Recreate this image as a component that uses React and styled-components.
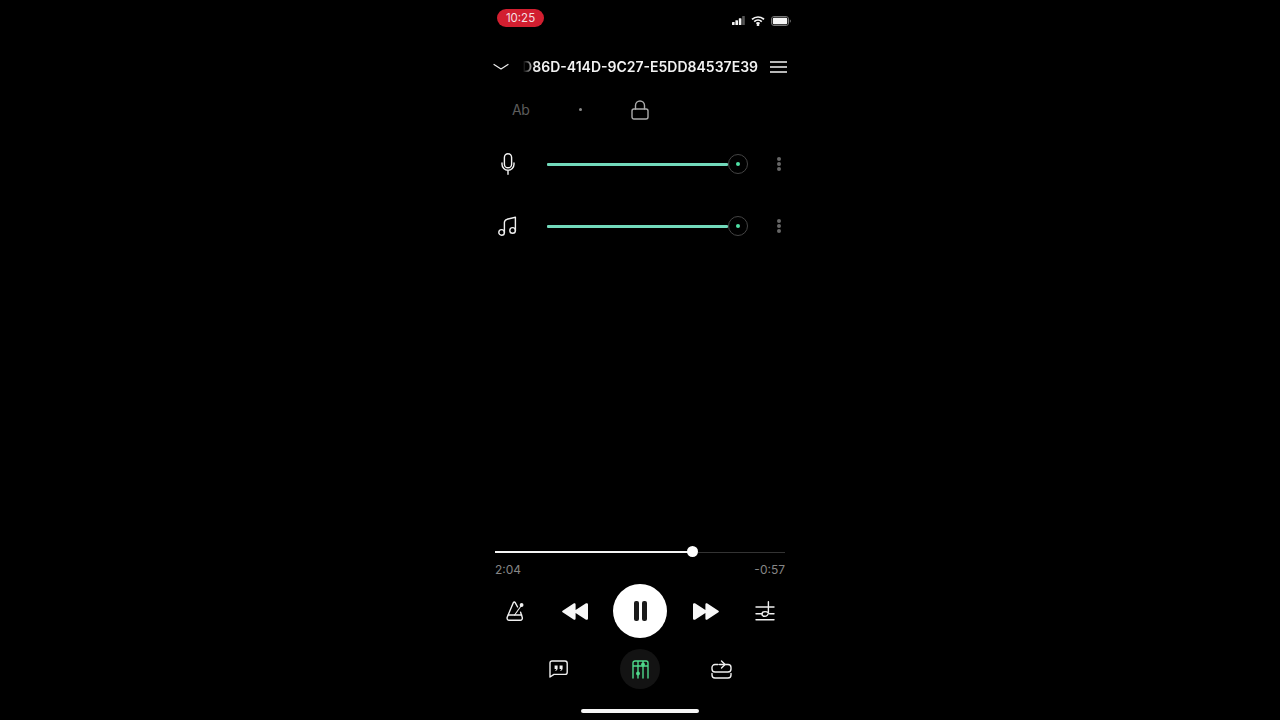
import React from 'react';
import styled, { createGlobalStyle } from 'styled-components';

const Global = createGlobalStyle`
  html, body {
    margin: 0;
    padding: 0;
    background: #000;
  }
`;

const Screen = styled.div`
  width: 320px;
  height: 720px;
  margin: 0 auto;
  display: flex;
  flex-direction: column;
  background: #000;
  color: #fff;
  font-family: Inter, "Liberation Sans", sans-serif;
  overflow: hidden;
`;

const StatusBar = styled.div`
  height: 18px;
  margin-top: 9px;
  padding: 0 9px 0 17px;
  display: flex;
  align-items: center;
  justify-content: space-between;
`;

const TimePill = styled.div`
  width: 47px;
  height: 18px;
  border-radius: 9px;
  background: #d21f30;
  font-size: 11.5px;
  line-height: 18px;
  text-align: center;
  color: #f4dfe1;
`;

const StatusIcons = styled.div`
  display: flex;
  align-items: center;
  gap: 6px;
  margin-top: 5px;
`;

const Header = styled.div`
  margin-top: 28px;
  height: 24px;
  padding: 0 13px;
  display: flex;
  align-items: center;
`;

const Title = styled.div`
  width: 235px;
  margin-left: 14px;
  margin-bottom: 2px;
  overflow: hidden;
  display: flex;
  justify-content: flex-end;
  white-space: nowrap;
  font-size: 14px;
  font-weight: 600;
  color: #f2f2f2;
  mask-image: linear-gradient(to right, transparent 0, #000 12px);
`;

const MenuSpot = styled.div`
  margin-left: 12px;
  display: flex;
`;

const ToolRow = styled.div`
  margin-top: 19px;
  height: 24px;
  padding-left: 32px;
  display: flex;
  align-items: center;
`;

const AbLabel = styled.span`
  width: 18px;
  margin-bottom: 2px;
  font-size: 14px;
  letter-spacing: -0.5px;
  color: #5c5c5c;
`;

const ToolDot = styled.span`
  width: 3px;
  height: 3px;
  margin-left: 49px;
  margin-bottom: 2px;
  border-radius: 50%;
  background: #8a8a8a;
`;

const LockSpot = styled.div`
  margin-left: 49px;
  display: flex;
`;

const Mixer = styled.div`
  margin-top: 29px;
  padding: 0 15px;
  display: flex;
  flex-direction: column;
  gap: 37px;
`;

const MixerRow = styled.div`
  height: 25px;
  display: flex;
  align-items: center;
`;

const MixerIcon = styled.div`
  width: 26px;
  margin-right: 26px;
  display: flex;
  justify-content: center;
`;

const Track = styled.div`
  flex: 1;
  height: 3px;
  margin-top: 1px;
  border-radius: 1px;
  background: #72d9bb;
`;

const Knob = styled.div`
  width: 20px;
  height: 20px;
  box-sizing: border-box;
  border: 1.5px solid #444;
  border-radius: 50%;
  display: flex;
  align-items: center;
  justify-content: center;
  &::after {
    content: '';
    width: 4px;
    height: 4px;
    border-radius: 50%;
    background: #4fe0a5;
  }
`;

const MoreDots = styled.div`
  width: 12px;
  margin-left: 25px;
  display: flex;
  flex-direction: column;
  align-items: center;
  gap: 1px;
  span {
    width: 4px;
    height: 4px;
    border-radius: 50%;
    background: #666;
  }
`;

const Spacer = styled.div`
  flex: 1;
`;

const Progress = styled.div`
  margin: 0 15px;
  height: 12px;
  display: flex;
  align-items: center;
  position: relative;
  background: linear-gradient(#333, #333) no-repeat center / 100% 1px;
`;

const ProgressFill = styled.div`
  height: 2px;
  background: #f4f4f4;
`;

const ProgressThumb = styled.div`
  position: absolute;
  top: 0;
  width: 11px;
  height: 11px;
  margin-left: -5.5px;
  border-radius: 50%;
  background: #fff;
`;

const Times = styled.div`
  margin-top: 5px;
  padding: 0 15px;
  display: flex;
  justify-content: space-between;
  font-size: 12px;
  line-height: 14px;
  color: #868686;
`;

const Controls = styled.div`
  margin-top: 7px;
  height: 54px;
  padding-left: 15px;
  display: flex;
  align-items: center;
`;

const Spot = styled.div`
  margin-left: ${(p) => p.$left}px;
  display: flex;
  align-items: center;
  justify-content: center;
`;

const PauseButton = styled.div`
  width: 54px;
  height: 54px;
  border-radius: 50%;
  background: #fff;
  display: flex;
  align-items: center;
  justify-content: center;
  gap: 3px;
  margin-left: ${(p) => p.$left}px;
  span {
    width: 5px;
    height: 20px;
    border-radius: 2px;
    background: #1a1a1a;
  }
`;

const Secondary = styled.div`
  margin-top: 11px;
  height: 40px;
  padding-left: 15px;
  display: flex;
  align-items: center;
`;

const ActiveDisc = styled.div`
  width: 40px;
  height: 40px;
  border-radius: 50%;
  background: #131313;
  display: flex;
  align-items: center;
  justify-content: center;
  margin-left: ${(p) => p.$left}px;
`;

const HomeBar = styled.div`
  width: 118px;
  height: 4px;
  margin: 20px auto 7px;
  border-radius: 2px;
  background: #f5f5f5;
`;

const line = { fill: 'none', stroke: 'currentColor', strokeWidth: 1.4, strokeLinecap: 'round', strokeLinejoin: 'round' };

function Signal() {
  return (
    <svg width="13" height="9" viewBox="0 0 13 9">
      <rect x="0" y="6" width="2.6" height="3" rx="0.5" fill="#f4f4f4" />
      <rect x="3.4" y="4.2" width="2.6" height="4.8" rx="0.5" fill="#f4f4f4" />
      <rect x="6.8" y="2.2" width="2.6" height="6.8" rx="0.5" fill="#f4f4f4" />
      <rect x="10.2" y="0" width="2.6" height="9" rx="0.5" fill="#555" />
    </svg>
  );
}

function Wifi() {
  return (
    <svg width="14" height="10" viewBox="0 0 14 10" fill="none" stroke="#f6f6f6" strokeWidth="1.7">
      <path d="M1 3.4C4.4 .2 9.6 .2 13 3.4" />
      <path d="M3.2 5.6C5.4 3.6 8.6 3.6 10.8 5.6" />
      <path d="M5.4 7.7C6.3 6.9 7.7 6.9 8.6 7.7" />
      <circle cx="7" cy="9" r="0.5" fill="#f6f6f6" />
    </svg>
  );
}

function Battery() {
  return (
    <svg width="20" height="10" viewBox="0 0 20 10">
      <rect x="0.5" y="0.5" width="17" height="9" rx="2.5" fill="none" stroke="#777" />
      <rect x="1.8" y="1.8" width="14.4" height="6.4" rx="1.2" fill="#f5f5f5" />
      <path d="M18.8 3.4c.7.2 1 .8 1 1.6s-.3 1.4-1 1.6z" fill="#777" />
    </svg>
  );
}

function Chevron() {
  return (
    <svg width="16" height="8" viewBox="0 0 16 8" style={{ color: '#eee' }}>
      <path d="M1 1.5 8 6 15 1.5" {...line} strokeWidth="1.2" />
    </svg>
  );
}

function Menu() {
  return (
    <svg width="17" height="12" viewBox="0 0 17 12" stroke="#f4f4f4" strokeWidth="1.5">
      <path d="M0 1h17M0 6h17M0 11h17" />
    </svg>
  );
}

function Lock() {
  return (
    <svg width="18" height="20" viewBox="0 0 18 20" style={{ color: '#ababab' }}>
      <rect x="1" y="9" width="16" height="10" rx="2" {...line} />
      <path d="M4.5 9V5.5a4.5 4.5 0 0 1 9 0V9" {...line} />
    </svg>
  );
}

function Mic() {
  return (
    <svg width="14" height="22" viewBox="0 0 14 22" style={{ color: '#f4f4f4' }}>
      <rect x="3.4" y="0.8" width="7.2" height="14" rx="3.6" {...line} />
      <path d="M1 10v1.2a6 6 0 0 0 12 0V10M7 17.4V21.2" {...line} />
    </svg>
  );
}

function Notes() {
  return (
    <svg width="20" height="20" viewBox="0 0 20 20" style={{ color: '#f0f0f0' }}>
      <circle cx="3.6" cy="16.4" r="2.8" {...line} />
      <circle cx="14.6" cy="14.4" r="2.8" {...line} />
      <path d="M6.4 16.4V6.4C6.4 4.6 7.2 3.8 9 3.3L17.4 1.2v13.2" {...line} />
    </svg>
  );
}

function Metronome() {
  return (
    <svg width="18" height="20" viewBox="0 0 18 20" style={{ color: '#f0f0f0' }}>
      <path d="M7.4 1.6c.5-.9 1.3-.9 1.8 0l2.4 4.4M7.4 1.6 1.2 16.2c-.5 1.6.4 3 2 3h11c1.6 0 2.5-1.3 2-3l-1.6-5" {...line} />
      <path d="M2.4 14h13.2" {...line} />
      <path d="M8.6 14 15 5" {...line} strokeWidth="1.1" />
      <circle cx="15.6" cy="4" r="1.9" fill="currentColor" />
    </svg>
  );
}

function Rewind({ flip }) {
  return (
    <svg width="26" height="17" viewBox="0 0 26 17" style={{ transform: flip ? 'scaleX(-1)' : undefined }}>
      <path
        d="M0.6 7.7 11.6 0.4C12.6-.2 13.6 .3 13.6 1.5V7L23.6.4C24.8-.2 26 .3 26 1.5V15.5C26 16.7 24.8 17.2 23.6 16.6L13.6 10V15.5C13.6 16.7 12.6 17.2 11.6 16.6L0.6 9.3C0 8.9 0 8.1.6 7.7Z"
        fill="#f7f7f7"
      />
    </svg>
  );
}

function NoteLines() {
  return (
    <svg width="20" height="20" viewBox="0 0 20 20" style={{ color: '#f0f0f0' }}>
      <path d="M1 6h18M1 12.8h6M14.5 12.8h4.5M1 18.8h18" {...line} />
      <path d="M13.4 0.8V11.5c0 2.2-1.8 3.8-3.8 3.8-1.6 0-2.6-.9-2.6-2.2 0-1.5 1.4-2.5 3-2.5 1.2 0 2.5.5 3.4 1.2" {...line} />
    </svg>
  );
}

function Quote() {
  return (
    <svg width="19" height="18" viewBox="0 0 19 18" style={{ color: '#f0f0f0' }}>
      <path d="M3 1h13a2.2 2.2 0 0 1 2.2 2.2v9a2.2 2.2 0 0 1-2.2 2.2H5L1 17V3A2 2 0 0 1 3 1Z" {...line} />
      <path d="M5.6 5.6h3v3c0 1.2-.8 2-2 2.4l-.3-1c.6-.2 1-.6 1-1.1H5.6ZM10.6 5.6h3v3c0 1.2-.8 2-2 2.4l-.3-1c.6-.2 1-.6 1-1.1h-1.7Z" fill="currentColor" />
    </svg>
  );
}

function Fretboard() {
  return (
    <svg width="17" height="19" viewBox="0 0 17 19" style={{ color: '#4fd98c' }}>
      <path d="M1 18V3a2 2 0 0 1 2-2h11a2 2 0 0 1 2 2v15M6 1v17M11 1v17M1 6h15" {...line} />
      <circle cx="11" cy="4.5" r="1.9" fill="currentColor" />
      <circle cx="6" cy="13.5" r="1.9" fill="currentColor" />
    </svg>
  );
}

function Loop() {
  return (
    <svg width="21" height="19" viewBox="0 0 21 19" style={{ color: '#f0f0f0' }}>
      <path d="M7 4.5H4a3 3 0 0 0-3 3V9a3 3 0 0 0 3 3h13a3 3 0 0 0 3-3V7.5a3 3 0 0 0-3-3H8.5" {...line} />
      <path d="M10.5 1 14 4.5 10.5 8" {...line} />
      <path d="M1 13.5v1.5a3 3 0 0 0 3 3h13a3 3 0 0 0 3-3v-1.5" {...line} />
    </svg>
  );
}

function MixerLine({ icon }) {
  return (
    <MixerRow>
      <MixerIcon>{icon}</MixerIcon>
      <Track />
      <Knob />
      <MoreDots><span /><span /><span /></MoreDots>
    </MixerRow>
  );
}

export default function App() {
  const played = 197.5 / 290;
  return (
    <Screen>
      <Global />
      <StatusBar>
        <TimePill>10:25</TimePill>
        <StatusIcons>
          <Signal />
          <Wifi />
          <Battery />
        </StatusIcons>
      </StatusBar>

      <Header>
        <Chevron />
        <Title>D86D-414D-9C27-E5DD84537E39</Title>
        <MenuSpot><Menu /></MenuSpot>
      </Header>

      <ToolRow>
        <AbLabel>Ab</AbLabel>
        <ToolDot />
        <LockSpot><Lock /></LockSpot>
      </ToolRow>

      <Mixer>
        <MixerLine icon={<Mic />} />
        <MixerLine icon={<Notes />} />
      </Mixer>

      <Spacer />

      <Progress>
        <ProgressFill style={{ width: `${played * 100}%` }} />
        <ProgressThumb style={{ left: `${played * 100}%` }} />
      </Progress>
      <Times>
        <span>2:04</span>
        <span>-0:57</span>
      </Times>

      <Controls>
        <Spot $left={11}><Metronome /></Spot>
        <Spot $left={38}><Rewind /></Spot>
        <PauseButton $left={25}><span /><span /></PauseButton>
        <Spot $left={26}><Rewind flip /></Spot>
        <Spot $left={36}><NoteLines /></Spot>
      </Controls>

      <Secondary>
        <Spot $left={54}><Quote /></Spot>
        <ActiveDisc $left={52}><Fretboard /></ActiveDisc>
        <Spot $left={51}><Loop /></Spot>
      </Secondary>

      <HomeBar />
    </Screen>
  );
}
